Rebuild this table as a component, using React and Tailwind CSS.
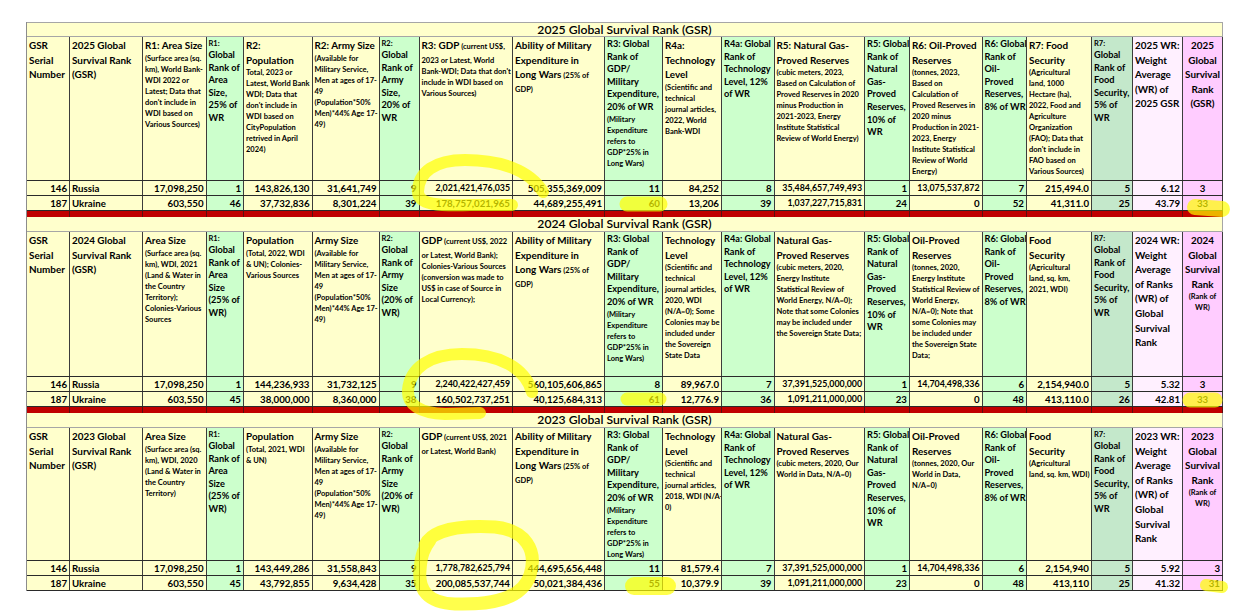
import React from "react";

const GRID =
  "grid grid-cols-[43px_73px_63.5px_37.5px_68.5px_67px_40px_93.5px_92px_58px_59px_52.5px_90.5px_45px_72.5px_44.5px_65px_41px_50px_40px]";

const Y = "bg-[#ffffcc]";
const G = "bg-[#ccffcc]";
const D = "bg-[#c4e8cb]";
const W = "bg-[#fff0ff]";
const P = "bg-[#ffccff]";
const COL_BG = [Y, Y, Y, G, Y, Y, G, Y, Y, G, Y, G, Y, G, Y, G, Y, D, W, P];

const LINE = {
  b: "text-[9.9px] leading-[14.6px]",
  m: "text-[9.2px] leading-[12.6px]",
  s: "text-[7.5px] leading-[11px]",
};
const TEXT = {b: "text-[9.9px]", m: "text-[9.2px]", s: "text-[7.5px]"};

// header lines shared by the three years
const GSR_NO = [["b", "GSR"], ["b", "Serial"], ["b", "Number"]];
const ABILITY = [
  ["b", "Ability of Military"],
  ["b", "Expenditure in"],
  [["b", "Long Wars"], ["s", " (25% of"]],
  ["s", "GDP)"],
];
const R3 = [
  ["m", "R3: Global"],
  ["m", "Rank of"],
  ["m", "GDP/"],
  ["m", "Military"],
  ["m", "Expenditure,"],
  ["m", "20% of WR"],
  ["s", "(Military"],
  ["s", "Expenditure"],
  ["s", "refers to"],
  ["s", "GDP*25% in"],
  ["s", "Long Wars)"],
];
const R4A = [["m", "R4a: Global"], ["m", "Rank of"], ["m", "Technology"], ["m", "Level, 12%"], ["m", "of WR"]];
const R5 = [
  ["m", "R5: Global"],
  ["m", "Rank of"],
  ["m", "Natural"],
  ["m", "Gas-"],
  ["m", "Proved"],
  ["m", "Reserves,"],
  ["m", "10% of"],
  ["m", "WR"],
];
const R6 = [["m", "R6: Global"], ["m", "Rank of"], ["m", "Oil-"], ["m", "Proved"], ["m", "Reserves,"], ["m", "8% of WR"]];
const R7 = [["s", "R7:"], ["m", "Global"], ["m", "Rank of"], ["m", "Food"], ["m", "Security,"], ["m", "5% of"], ["m", "WR"]];
const ARMY = (title) => [
  ["b", title],
  ["s", "(Available for"],
  ["s", "Military Service,"],
  ["s", "Men at ages of 17-"],
  ["s", "49"],
  ["s", "(Population*50%"],
  ["s", "Men)*44% Age 17-"],
  ["s", "49)"],
];
const RANK_OLD = (n, p) => [["s", n], ["m", "Global"], ["m", "Rank of"], ["m", p], ["m", "Size"], ["m", p === "Area" ? "(25% of" : "(20% of"], ["m", "WR)"]];
const WR_OLD = (y) => [
  ["b", `${y} WR:`],
  ["b", "Weight"],
  ["b", "Average"],
  ["b", "of Ranks"],
  ["b", "(WR) of"],
  ["b", "Global"],
  ["b", "Survival"],
  ["b", "Rank"],
];
const GSR_OLD = (y) => [["b", y], ["b", "Global"], ["b", "Survival"], ["b", "Rank"], ["s", "(Rank of"], ["s", "WR)"]];

const SECTIONS = [
  {
    year: "2025",
    height: "h-[144px]",
    last: "text-center",
    bar: true,
    headers: [
      GSR_NO,
      [["b", "2025 Global"], ["b", "Survival Rank"], ["b", "(GSR)"]],
      [
        ["b", "R1: Area Size"],
        ["s", "(Surface area (sq."],
        ["s", "km), World Bank-"],
        ["s", "WDI 2022 or"],
        ["s", "Latest; Data that"],
        ["s", "don't include in"],
        ["s", "WDI based on"],
        ["s", "Various Sources)"],
      ],
      [["s", "R1:"], ["m", "Global"], ["m", "Rank of"], ["m", "Area"], ["m", "Size,"], ["m", "25% of"], ["m", "WR"]],
      [
        ["b", "R2:"],
        ["b", "Population"],
        ["s", "Total, 2023 or"],
        ["s", "Latest, World Bank"],
        ["s", "WDI; Data that"],
        ["s", "don't include in"],
        ["s", "WDI based on"],
        ["s", "CityPopulation"],
        ["s", "retrived in April"],
        ["s", "2024)"],
      ],
      ARMY("R2: Army Size"),
      [["s", "R2:"], ["m", "Global"], ["m", "Rank of"], ["m", "Army"], ["m", "Size,"], ["m", "20% of"], ["m", "WR"]],
      [
        [["b", "R3: GDP"], ["s", " (current US$,"]],
        ["s", "2023 or Latest, World"],
        ["s", "Bank-WDI; Data that don't"],
        ["s", "include in WDI based on"],
        ["s", "Various Sources)"],
      ],
      ABILITY,
      R3,
      [
        ["b", "R4a:"],
        ["b", "Technology"],
        ["b", "Level"],
        ["s", "(Scientific and"],
        ["s", "technical"],
        ["s", "journal articles,"],
        ["s", "2022, World"],
        ["s", "Bank-WDI"],
      ],
      R4A,
      [
        ["b", "R5: Natural Gas-"],
        ["b", "Proved Reserves"],
        ["s", "(cubic meters, 2023,"],
        ["s", "Based on Calculation of"],
        ["s", "Proved Reserves in 2020"],
        ["s", "minus Production in"],
        ["s", "2021-2023, Energy"],
        ["s", "Institute Statistical"],
        ["s", "Review of World Energy)"],
      ],
      R5,
      [
        ["b", "R6: Oil-Proved"],
        ["b", "Reserves"],
        ["s", "(tonnes, 2023,"],
        ["s", "Based on"],
        ["s", "Calculation of"],
        ["s", "Proved Reserves in"],
        ["s", "2020 minus"],
        ["s", "Production in 2021-"],
        ["s", "2023, Energy"],
        ["s", "Institute Statistical"],
        ["s", "Review of World"],
        ["s", "Energy)"],
      ],
      R6,
      [
        ["b", "R7: Food"],
        ["b", "Security"],
        ["s", "(Agricultural"],
        ["s", "land, 1000"],
        ["s", "Hectare (ha),"],
        ["s", "2022, Food and"],
        ["s", "Agriculture"],
        ["s", "Organization"],
        ["s", "(FAO); Data that"],
        ["s", "don't include in"],
        ["s", "FAO based on"],
        ["s", "Various Sources)"],
      ],
      R7,
      [["b", "2025 WR:"], ["b", "Weight"], ["b", "Average"], ["b", "(WR) of"], ["b", "2025 GSR"]],
      [["b", "2025"], ["b", "Global"], ["b", "Survival"], ["b", "Rank"], ["b", "(GSR)"]],
    ],
    rows: [
      ["146", "Russia", "17,098,250", "1", "143,826,130", "31,641,749", "9", "2,021,421,476,035", "505,355,369,009", "11", "84,252", "8", "35,484,657,749,493", "1", "13,075,537,872", "7", "215,494.0", "5", "6.12", "3"],
      ["187", "Ukraine", "603,550", "46", "37,732,836", "8,301,224", "39", "178,757,021,965", "44,689,255,491", "60", "13,206", "39", "1,037,227,715,831", "24", "0", "52", "41,311.0", "25", "43.79", "33"],
    ],
  },
  {
    year: "2024",
    height: "h-[145px]",
    last: "text-center",
    bar: true,
    headers: [
      GSR_NO,
      [["b", "2024 Global"], ["b", "Survival Rank"], ["b", "(GSR)"]],
      [
        ["b", "Area Size"],
        ["s", "(Surface area (sq."],
        ["s", "km), WDI, 2021"],
        ["s", "(Land & Water in"],
        ["s", "the Country"],
        ["s", "Territory);"],
        ["s", "Colonies-Various"],
        ["s", "Sources"],
      ],
      RANK_OLD("R1:", "Area"),
      [["b", "Population"], ["s", "(Total, 2022, WDI"], ["s", "& UN); Colonies-"], ["s", "Various Sources"]],
      ARMY("Army Size"),
      RANK_OLD("R2:", "Army"),
      [
        [["b", "GDP"], ["s", " (current US$, 2022"]],
        ["s", "or Latest, World Bank);"],
        ["s", "Colonies-Various Sources"],
        ["s", "(conversion was made to"],
        ["s", "US$ in case of Source in"],
        ["s", "Local Currency);"],
      ],
      ABILITY,
      R3,
      [
        ["b", "Technology"],
        ["b", "Level"],
        ["s", "(Scientific and"],
        ["s", "technical"],
        ["s", "journal articles,"],
        ["s", "2020, WDI"],
        ["s", "(N/A=0); Some"],
        ["s", "Colonies may be"],
        ["s", "included under"],
        ["s", "the Sovereign"],
        ["s", "State Data"],
      ],
      R4A,
      [
        ["b", "Natural Gas-"],
        ["b", "Proved Reserves"],
        ["s", "(cubic meters, 2020,"],
        ["s", "Energy Institute"],
        ["s", "Statistical Review of"],
        ["s", "World Energy, N/A=0);"],
        ["s", "Note that some Colonies"],
        ["s", "may be included under"],
        ["s", "the Sovereign State Data;"],
      ],
      R5,
      [
        ["b", "Oil-Proved"],
        ["b", "Reserves"],
        ["s", "(tonnes, 2020,"],
        ["s", "Energy Institute"],
        ["s", "Statistical Review of"],
        ["s", "World Energy,"],
        ["s", "N/A=0); Note that"],
        ["s", "some Colonies may"],
        ["s", "be included under"],
        ["s", "the Sovereign State"],
        ["s", "Data;"],
      ],
      R6,
      [["b", "Food"], ["b", "Security"], ["s", "(Agricultural"], ["s", "land, sq. km,"], ["s", "2021, WDI)"]],
      R7,
      WR_OLD("2024"),
      GSR_OLD("2024"),
    ],
    rows: [
      ["146", "Russia", "17,098,250", "1", "144,236,933", "31,732,125", "9", "2,240,422,427,459", "560,105,606,865", "8", "89,967.0", "7", "37,391,525,000,000", "1", "14,704,498,336", "6", "2,154,940.0", "5", "5.32", "3"],
      ["187", "Ukraine", "603,550", "45", "38,000,000", "8,360,000", "38", "160,502,737,251", "40,125,684,313", "61", "12,776.9", "36", "1,091,211,000,000", "23", "0", "48", "413,110.0", "26", "42.81", "33"],
    ],
  },
  {
    year: "2023",
    height: "h-[133px]",
    last: "text-right",
    bar: false,
    headers: [
      GSR_NO,
      [["b", "2023 Global"], ["b", "Survival Rank"], ["b", "(GSR)"]],
      [
        ["b", "Area Size"],
        ["s", "(Surface area (sq."],
        ["s", "km), WDI, 2020"],
        ["s", "(Land & Water in"],
        ["s", "the Country"],
        ["s", "Territory)"],
      ],
      RANK_OLD("R1:", "Area"),
      [["b", "Population"], ["s", "(Total, 2021, WDI"], ["s", "& UN)"]],
      ARMY("Army Size"),
      RANK_OLD("R2:", "Army"),
      [[["b", "GDP"], ["s", " (current US$, 2021"]], ["s", "or Latest, World Bank)"]],
      ABILITY,
      R3,
      [
        ["b", "Technology"],
        ["b", "Level"],
        ["s", "(Scientific and"],
        ["s", "technical"],
        ["s", "journal articles,"],
        ["s", "2018, WDI (N/A-"],
        ["s", "0)"],
      ],
      R4A,
      [["b", "Natural Gas-"], ["b", "Proved Reserves"], ["s", "(cubic meters, 2020, Our"], ["s", "World in Data, N/A=0)"]],
      R5,
      [["b", "Oil-Proved"], ["b", "Reserves"], ["s", "(tonnes, 2020,  Our"], ["s", "World in Data,"], ["s", "N/A=0)"]],
      R6,
      [["b", "Food"], ["b", "Security"], ["s", "(Agricultural"], ["s", "land, sq. km, WDI)"]],
      R7,
      WR_OLD("2023"),
      GSR_OLD("2023"),
    ],
    rows: [
      ["146", "Russia", "17,098,250", "1", "143,449,286", "31,558,843", "9", "1,778,782,625,794", "444,695,656,448", "11", "81,579.4", "7", "37,391,525,000,000", "1", "14,704,498,336", "6", "2,154,940", "5", "5.92", "3"],
      ["187", "Ukraine", "603,550", "45", "43,792,855", "9,634,428", "35", "200,085,537,744", "50,021,384,436", "55", "10,379.9", "39", "1,091,211,000,000", "23", "0", "48", "413,110", "25", "41.32", "31"],
    ],
  },
];

function HeaderCell({lines, bg, center}) {
  return (
    <div
      className={`${bg} border-r border-[#3c3c3c] px-[2px] pt-[1px] font-bold overflow-hidden whitespace-nowrap ${
        center ? "text-center" : "text-left"
      }`}>
      {lines.map((line, i) => {
        const segs = typeof line[0] === "string" ? [line] : line;
        return (
          <div key={i} className={LINE[segs[0][0]]}>
            {segs.map(([k, t], j) => (
              <span key={j} className={TEXT[k]}>
                {t}
              </span>
            ))}
          </div>
        );
      })}
    </div>
  );
}

function DataRow({values, last}) {
  return (
    <div className={`${GRID} h-[15px] border-b border-[#2a2a2a]`}>
      {values.map((v, i) => {
        // Excel shrank the longest figures to fit their cells
        const shrunk = v.length >= 17 || (i === 14 && v.length >= 14);
        return (
          <div
            key={i}
            className={`${COL_BG[i]} border-r border-[#3c3c3c] px-[2px] leading-[14px] font-bold whitespace-nowrap overflow-hidden ${
              shrunk ? "text-[8.8px]" : "text-[9.7px]"
            } ${i === 1 ? "text-left" : i === 19 ? last : "text-right"}`}>
            {v}
          </div>
        );
      })}
    </div>
  );
}

function Section({sec, first}) {
  return (
    <>
      <div
        className={`h-[15px] ${Y} border-r border-b border-[#a6a6a6] text-center text-[12.2px] leading-[14px] font-semibold ${
          first ? "border-t" : ""
        }`}>
        {sec.year} Global Survival Rank (GSR)
      </div>
      <div className={`${GRID} ${sec.height} border-b border-[#2a2a2a]`}>
        {sec.headers.map((lines, i) => (
          <HeaderCell key={i} lines={lines} bg={COL_BG[i]} center={i === 19} />
        ))}
      </div>
      {sec.rows.map((r, i) => (
        <DataRow key={i} values={r} last={sec.last} />
      ))}
      {sec.bar && (
        <div className={`${GRID} h-[6px]`}>
          {COL_BG.map((_, i) => (
            <div key={i} className="bg-[#c00000] border-r border-[#5a1010]" />
          ))}
        </div>
      )}
    </>
  );
}

function Highlighter() {
  const pen = {
    fill: "none",
    stroke: "#ffff00",
    strokeOpacity: 0.7,
    strokeLinecap: "round",
    strokeLinejoin: "round",
  };
  return (
    <svg className="absolute left-0 top-0 pointer-events-none" width="1250" height="614">
      <path {...pen} strokeWidth="12" d="M 543 192 C 530 170, 500 160, 465 160 C 435 160, 418 172, 418 192 C 418 205, 440 206, 470 205 L 512 205" />
      <path {...pen} strokeWidth="15" d="M 627 204 L 660 204" />
      <path {...pen} strokeWidth="16" d="M 1195 207 L 1222 209" />
      <path {...pen} strokeWidth="12" d="M 532 392 C 525 368, 500 354, 462 354 C 430 354, 410 368, 408 390 C 407 405, 420 413, 445 414 L 480 413" />
      <path {...pen} strokeWidth="13" d="M 627 399 L 660 399" />
      <path {...pen} strokeWidth="15" d="M 1190 400 L 1215 400" />
      <path {...pen} strokeWidth="13" d="M 425 545 C 432 530, 460 525, 495 527 C 525 530, 538 550, 530 575 C 522 600, 490 605, 455 604 C 428 603, 418 590, 420 570 C 421 555, 424 548, 430 540" />
      <path {...pen} strokeWidth="18" d="M 634 586 L 667 586" />
      <path {...pen} strokeWidth="12" d="M 1206 585 L 1222 587" />
    </svg>
  );
}

export default function App() {
  return (
    <div className="relative w-[1250px] h-[614px] overflow-hidden bg-white pt-[22px] text-black font-['Lato','Carlito',sans-serif]">
      <div className="ml-[26px] w-[1197px] border-l border-[#8c8c8c]">
        {SECTIONS.map((sec, i) => (
          <Section key={sec.year} sec={sec} first={i === 0} />
        ))}
      </div>
      <Highlighter />
    </div>
  );
}
